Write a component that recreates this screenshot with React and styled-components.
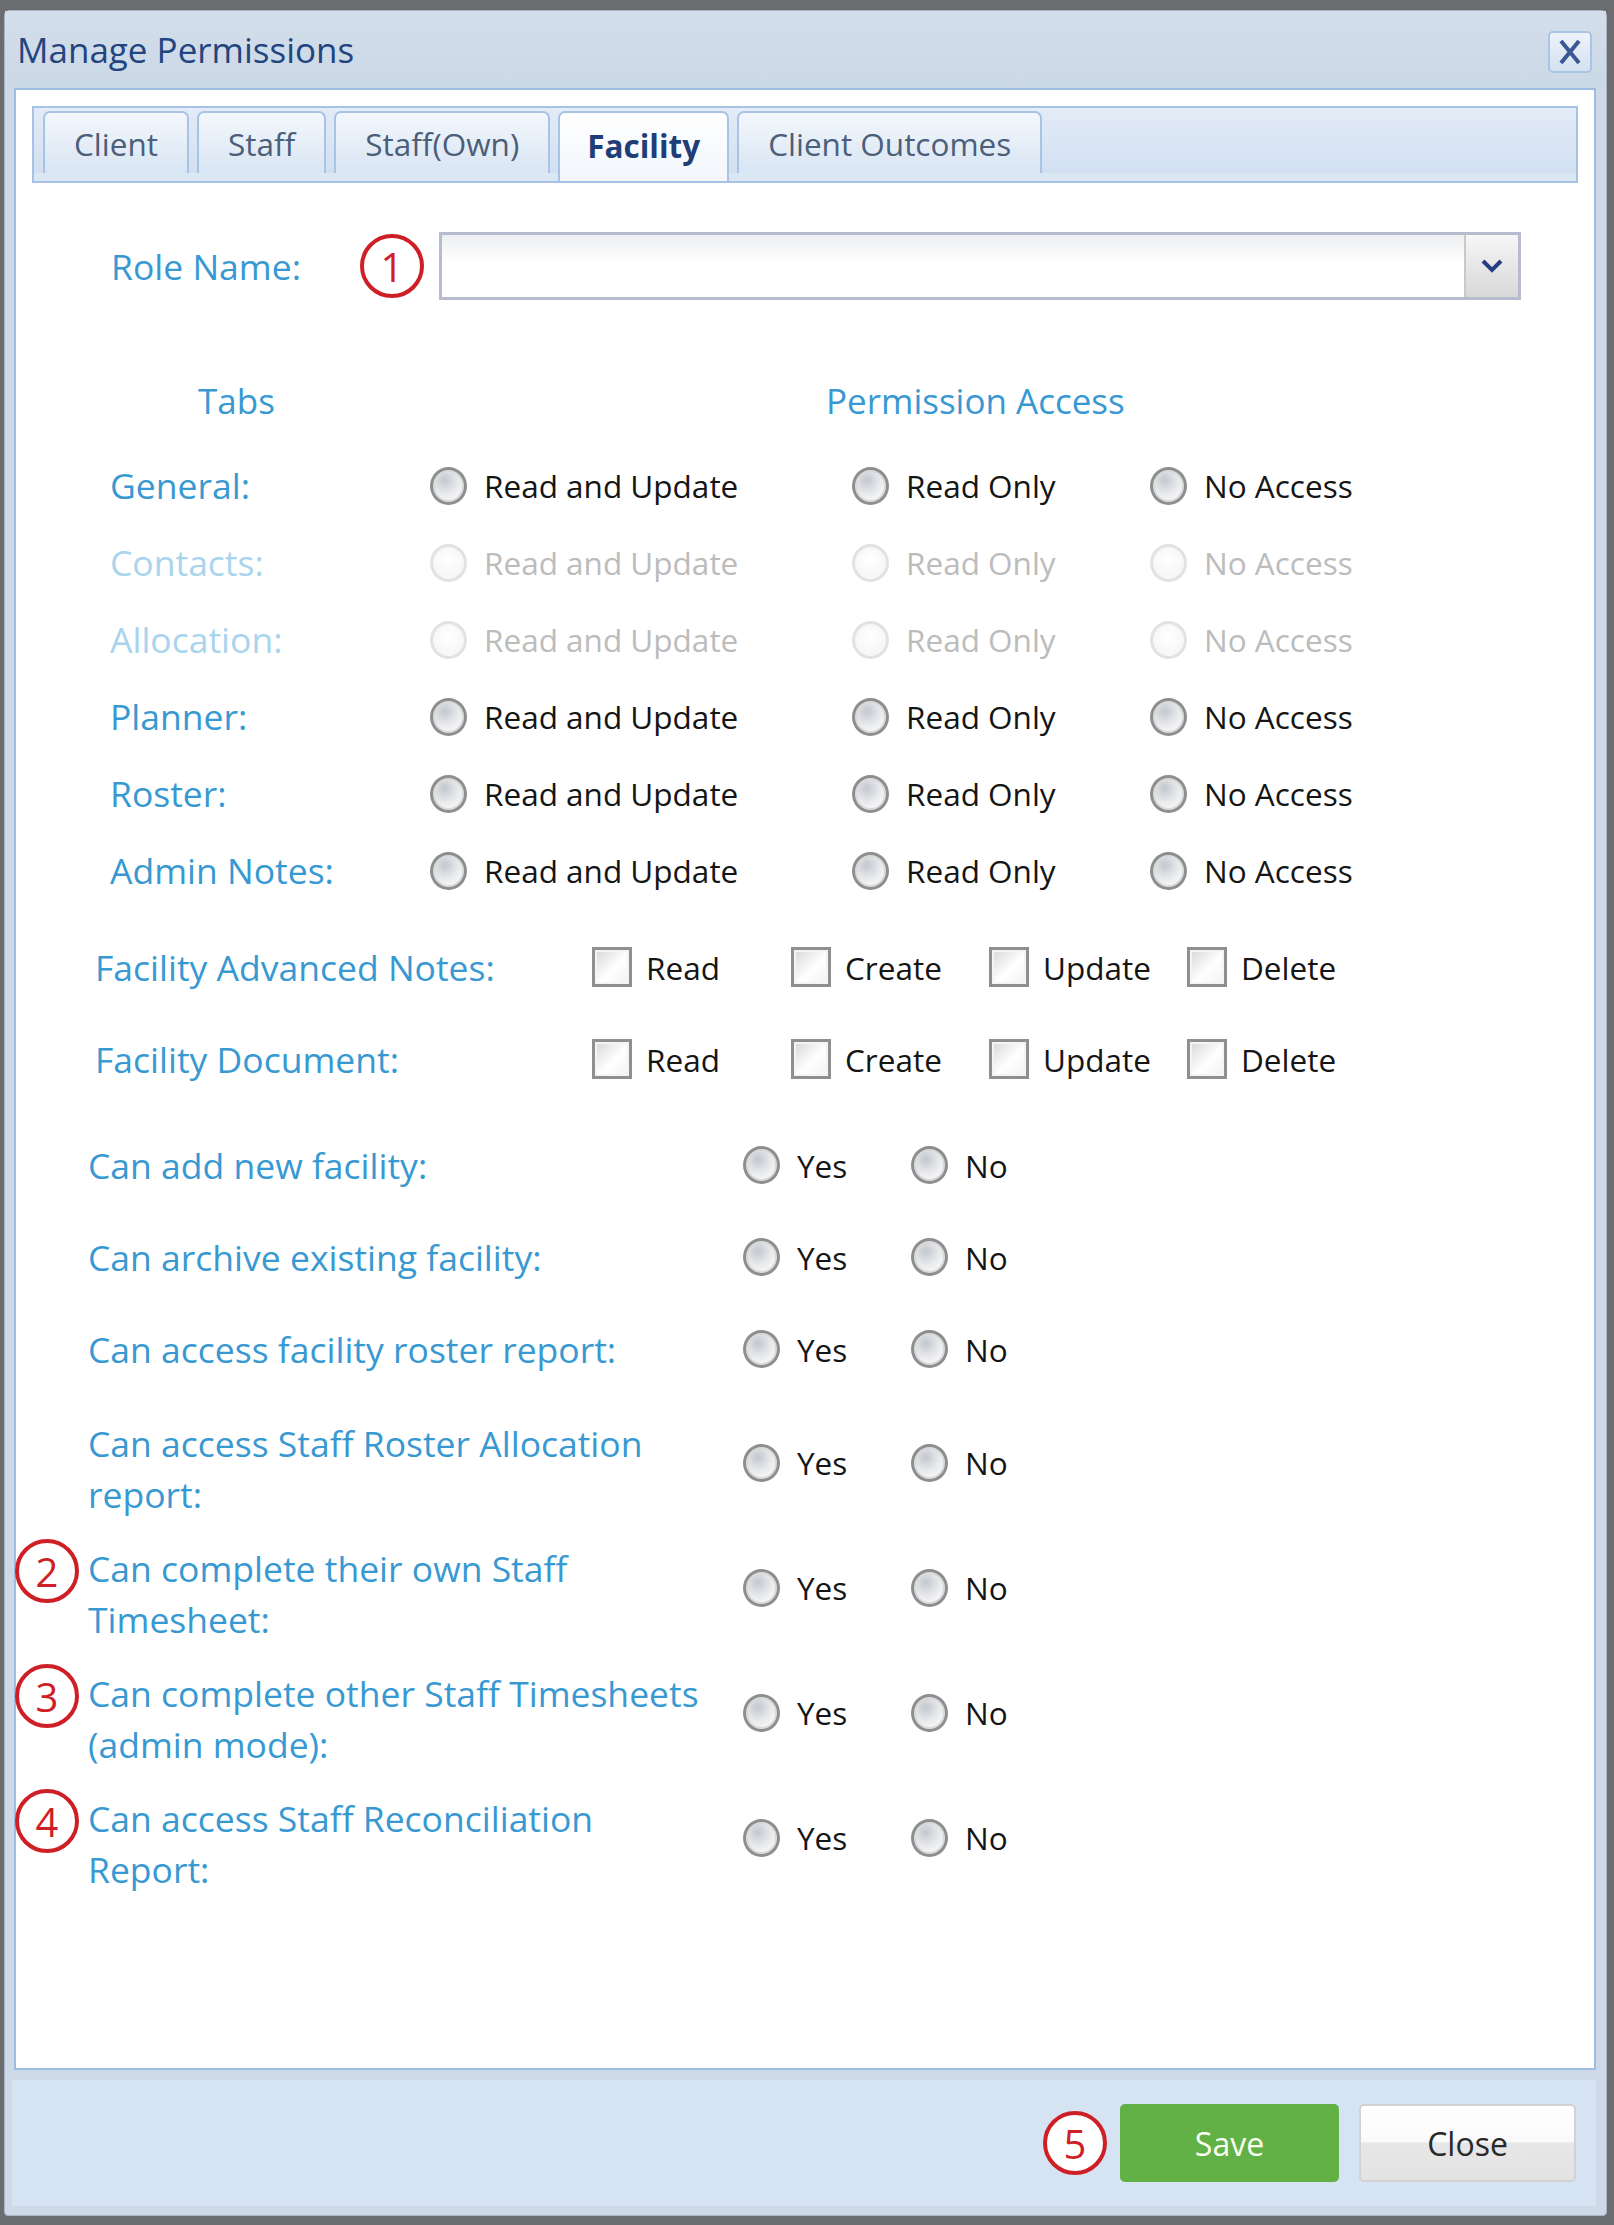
import React from 'react';
import styled, { createGlobalStyle } from 'styled-components';

const GlobalStyle = createGlobalStyle`
  html, body {
    margin: 0;
    padding: 0;
    background: #6b6c6f;
  }
  body {
    width: 1614px;
    height: 2225px;
    overflow: hidden;
    font-family: "Open Sans", "Noto Sans", sans-serif;
  }
`;

const BLUE = '#3899d2';
const BLUE_OFF = '#a9d4ee';

const Dialog = styled.div`
  margin: 10px 7px 0 4px;
  height: 2206px;
  box-sizing: border-box;
  border: 1px solid #a9b5c4;
  border-radius: 6px 6px 4px 4px;
  background: #cdd9e7;
  display: flex;
  flex-direction: column;
`;

const TitleBar = styled.div`
  height: 77px;
  flex-shrink: 0;
  display: flex;
  align-items: center;
  justify-content: space-between;
  padding: 0 14px 0 12px;
  background: linear-gradient(#d3deea, #cbd8e6);
`;

const Title = styled.div`
  font-size: 35px;
  color: #22457f;
`;

const CloseX = styled.div`
  width: 44px;
  height: 42px;
  box-sizing: border-box;
  border: 2px solid #a9c4e6;
  border-radius: 5px;
  background: linear-gradient(#eef3fa, #d5e1f0);
  display: flex;
  align-items: center;
  justify-content: center;
  margin-top: 4px;
`;

const Panel = styled.div`
  margin: 0 10px 0 9px;
  height: 1982px;
  flex-shrink: 0;
  box-sizing: border-box;
  border: 2px solid #9dbce2;
  background: #fff;
  display: flex;
  flex-direction: column;
`;

const TabStrip = styled.div`
  margin: 16px 16px 0 16px;
  height: 77px;
  box-sizing: border-box;
  border: 2px solid #a6c2e4;
  background: linear-gradient(#e3ecf7, #cfdef0);
  box-shadow: inset 0 -8px 0 #dce7f4;
  display: flex;
  align-items: flex-end;
  padding: 0 10px 8px 9px;
  gap: 8px;
`;

const Tab = styled.div`
  height: ${p => (p.$active ? 70 : 62)}px;
  margin-bottom: ${p => (p.$active ? -8 : 0)}px;
  box-sizing: border-box;
  padding: 0 ${p => (p.$active ? 27 : 29)}px;
  border: 2px solid #a8c3e4;
  border-bottom: none;
  border-radius: 7px 7px 0 0;
  background: ${p => (p.$active
    ? 'linear-gradient(#ffffff, #f2f6fb)'
    : 'linear-gradient(#f3f7fc, #d8e5f3)')};
  color: ${p => (p.$active ? '#1f3e78' : '#4b5e7a')};
  font-weight: ${p => (p.$active ? 700 : 400)};
  font-size: 31.5px;
  display: flex;
  align-items: ${p => (p.$active ? 'flex-start' : 'center')};
  padding-top: ${p => (p.$active ? 11 : 0)}px;
`;

const Marker = styled.div`
  position: absolute;
  left: ${p => p.$left}px;
  top: ${p => p.$top}px;
  width: 64px;
  height: 64px;
  box-sizing: border-box;
  border: 4px solid #cf1f26;
  border-radius: 50%;
  background: #fff;
  color: #cf1f26;
  font-size: 40px;
  display: flex;
  align-items: center;
  justify-content: center;
`;

const FooterMarker = styled(Marker)`
  position: static;
  margin-right: 13px;
`;

const RoleRow = styled.div`
  position: relative;
  margin-top: 49px;
  height: 68px;
  display: flex;
  align-items: center;
  padding-left: 95px;
`;

const FieldLabel = styled.div`
  font-size: 35.5px;
  color: ${p => (p.$off ? BLUE_OFF : BLUE)};
  white-space: nowrap;
  line-height: 51px;
`;

const RoleLabel = styled(FieldLabel)`
  width: 328px;
`;

const Select = styled.div`
  width: 1082px;
  height: 68px;
  box-sizing: border-box;
  border: 3px solid #b6bbcd;
  background: linear-gradient(#eceef1, #ffffff 45%);
  display: flex;
  justify-content: flex-end;
`;

const SelectButton = styled.div`
  width: 52px;
  border-left: 2px solid #c9c9c9;
  background: linear-gradient(#f6f6f6, #d8d8d8);
  display: flex;
  align-items: center;
  justify-content: center;
`;

const HeadRow = styled.div`
  margin-top: 75px;
  height: 50px;
  display: flex;
  align-items: center;
  padding-left: 182px;
`;

const Head = styled.div`
  width: ${p => p.$w || 'auto'};
  font-size: 35px;
  color: ${BLUE};
`;

const PermList = styled.div`
  margin-top: 22px;
`;

const PermRow = styled.div`
  height: 77px;
  display: grid;
  grid-template-columns: 320px 422px 298px auto;
  align-items: center;
  padding-left: 94px;
`;

const Option = styled.label`
  display: flex;
  align-items: center;
  gap: ${p => p.$gap || 17}px;
  font-size: 31.5px;
  color: ${p => (p.$off ? '#bcbcbc' : '#151515')};
  white-space: nowrap;
  margin-bottom: ${p => (p.$lift ? 12 : 0)}px;
`;

const Radio = styled.span`
  width: 37px;
  height: 38px;
  flex-shrink: 0;
  box-sizing: border-box;
  border-radius: 50%;
  border: 3px solid ${p => (p.$off ? '#e2e2e2' : '#8e8e8e')};
  background: ${p => (p.$off
    ? 'radial-gradient(circle at 50% 40%, #ffffff, #f3f3f3)'
    : 'radial-gradient(circle at 38% 32%, #c3c8cf 0%, #e6e8eb 45%, #fbfbfb 80%)')};
  box-shadow: inset 0 0 0 2px ${p => (p.$off ? '#f7f7f7' : '#d9d9d9')};
`;

const Check = styled.span`
  width: 40px;
  height: 40px;
  flex-shrink: 0;
  box-sizing: border-box;
  border: 3px solid #8f8f8f;
  background: linear-gradient(135deg, #d6d6d6, #ffffff 55%, #f1f1f1);
  box-shadow: inset 0 0 0 2px #f4f4f4;
`;

const CheckList = styled.div`
  margin-top: 12px;
`;

const CheckRow = styled.div`
  height: 92px;
  display: grid;
  grid-template-columns: 497px 199px 198px 198px auto;
  align-items: center;
  padding-left: 79px;
`;

const YesNoList = styled.div`
  margin-top: 14px;
`;

const YesNoRow = styled.div`
  position: relative;
  height: ${p => (p.$tall ? 125 : 92)}px;
  margin-top: ${p => (p.$gap || 0)}px;
  display: grid;
  grid-template-columns: 655px 168px auto;
  align-items: center;
  padding-left: 72px;
`;

const Footer = styled.div`
  margin: 10px 10px 9px 7px;
  height: 126px;
  flex-shrink: 0;
  background: #d6e3f2;
  display: flex;
  align-items: center;
  justify-content: flex-end;
  padding-right: 20px;
`;

const Button = styled.div`
  width: ${p => (p.$primary ? 219 : 217)}px;
  height: 78px;
  box-sizing: border-box;
  border-radius: 5px;
  font-size: 32px;
  display: flex;
  align-items: center;
  justify-content: center;
  color: ${p => (p.$primary ? '#fbfff0' : '#2a2a2a')};
  background: ${p => (p.$primary
    ? '#62b146'
    : 'linear-gradient(#ffffff 0%, #fafafa 48%, #e7e7e7 50%, #e3e3e3 100%)')};
  border: ${p => (p.$primary ? 'none' : '2px solid #d2d2d2')};
  margin-left: ${p => (p.$primary ? 0 : 20)}px;
`;

const tabs = ['Client', 'Staff', 'Staff(Own)', 'Facility', 'Client Outcomes'];

const permissions = [
  { name: 'General', off: false },
  { name: 'Contacts', off: true },
  { name: 'Allocation', off: true },
  { name: 'Planner', off: false },
  { name: 'Roster', off: false },
  { name: 'Admin Notes', off: false },
];

const checkRows = ['Facility Advanced Notes:', 'Facility Document:'];
const checkActions = ['Read', 'Create', 'Update', 'Delete'];

const yesNo = [
  { lines: ['Can add new facility:'] },
  { lines: ['Can archive existing facility:'] },
  { lines: ['Can access facility roster report:'] },
  { lines: ['Can access Staff Roster Allocation', 'report:'] },
  { lines: ['Can complete their own Staff', 'Timesheet:'], mark: 2 },
  { lines: ['Can complete other Staff Timesheets', '(admin mode):'], mark: 3 },
  { lines: ['Can access Staff Reconciliation', 'Report:'], mark: 4 },
];

export default function App() {
  return (
    <>
      <GlobalStyle />
      <Dialog>
        <TitleBar>
          <Title>Manage Permissions</Title>
          <CloseX>
            <svg width="26" height="28" viewBox="0 0 26 28">
              <path d="M4 3 L22 25 M22 3 L4 25" stroke="#3a5795" strokeWidth="4" fill="none" />
            </svg>
          </CloseX>
        </TitleBar>

        <Panel>
          <TabStrip>
            {tabs.map(t => (
              <Tab key={t} $active={t === 'Facility'}>{t}</Tab>
            ))}
          </TabStrip>

          <RoleRow>
            <RoleLabel>Role Name:</RoleLabel>
            <Marker $left={344} $top={2}>1</Marker>
            <Select>
              <SelectButton>
                <svg width="22" height="14" viewBox="0 0 22 14">
                  <path d="M2 2 L11 11 L20 2" stroke="#263f80" strokeWidth="4" fill="none" />
                </svg>
              </SelectButton>
            </Select>
          </RoleRow>

          <HeadRow>
            <Head $w="628px">Tabs</Head>
            <Head>Permission Access</Head>
          </HeadRow>

          <PermList>
            {permissions.map(p => (
              <PermRow key={p.name}>
                <FieldLabel $off={p.off}>{p.name}:</FieldLabel>
                <Option $off={p.off}><Radio $off={p.off} />Read and Update</Option>
                <Option $off={p.off}><Radio $off={p.off} />Read Only</Option>
                <Option $off={p.off}><Radio $off={p.off} />No Access</Option>
              </PermRow>
            ))}
          </PermList>

          <CheckList>
            {checkRows.map(r => (
              <CheckRow key={r}>
                <FieldLabel>{r}</FieldLabel>
                {checkActions.map(a => (
                  <Option key={a} $gap={14}><Check />{a}</Option>
                ))}
              </CheckRow>
            ))}
          </CheckList>

          <YesNoList>
            {yesNo.map((q, i) => {
              const tall = q.lines.length > 1;
              return (
                <YesNoRow key={i} $tall={tall} $gap={i === 3 ? 11 : 0}>
                  {q.mark && <Marker $left={-1} $top={8}>{q.mark}</Marker>}
                  <FieldLabel>
                    {q.lines.map((l, j) => <div key={j}>{l}</div>)}
                  </FieldLabel>
                  <Option $lift={tall}><Radio />Yes</Option>
                  <Option $lift={tall}><Radio />No</Option>
                </YesNoRow>
              );
            })}
          </YesNoList>
        </Panel>

        <Footer>
          <FooterMarker>5</FooterMarker>
          <Button $primary>Save</Button>
          <Button>Close</Button>
        </Footer>
      </Dialog>
    </>
  );
}
